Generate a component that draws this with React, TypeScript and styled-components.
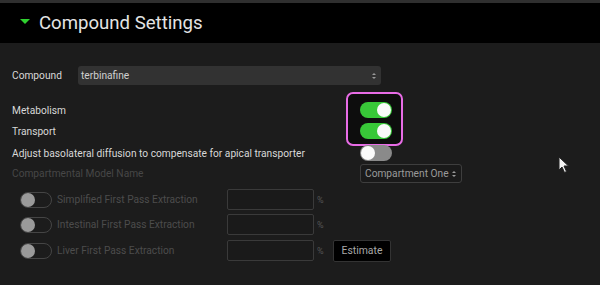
import React, { useState } from 'react';
import styled, { createGlobalStyle } from 'styled-components';

const GlobalStyle = createGlobalStyle`
  html, body {
    margin: 0;
    padding: 0;
    background: #1c1c1c;
  }
  body {
    font-family: Roboto, "Liberation Sans", Arial, sans-serif;
    width: 600px;
    height: 285px;
    overflow: hidden;
  }
`;

const Page = styled.div`
  position: relative;
  width: 600px;
  height: 285px;
  background: #1c1c1c;
  border-top: 3px solid #2f2f2f;
  box-sizing: border-box;
`;

const Header = styled.div`
  height: 40px;
  background: #000;
  display: flex;
  align-items: center;
  padding-left: 20px;
  gap: 9px;
`;

const Caret = styled.div`
  width: 0;
  height: 0;
  border-left: 5px solid transparent;
  border-right: 5px solid transparent;
  border-top: 5px solid #2fd12f;
  margin-top: -3px;
`;

const Title = styled.h2`
  margin: 0;
  font-size: 18.6px;
  font-weight: 400;
  color: #e4e4e4;
`;

const Body = styled.div`
  padding: 23px 12px 0 12px;
  display: flex;
  flex-direction: column;
`;

const CompoundRow = styled.div`
  display: flex;
  align-items: center;
  height: 19px;
`;

// left label column + right control column
const SettingRow = styled.div<{ $h: number; $mt: number }>`
  display: grid;
  grid-template-columns: 348px auto;
  align-items: center;
  height: ${p => p.$h}px;
  margin-top: ${p => p.$mt}px;
`;

const Label = styled.span<{ $w?: number; $dim?: boolean }>`
  font-size: 10.2px;
  color: ${p => (p.$dim ? '#474747' : '#d8d8d8')};
  width: ${p => (p.$w ? `${p.$w}px` : 'auto')};
  flex-shrink: 0;
  white-space: nowrap;
`;

const Select = styled.div<{ $w: number; $outline?: boolean }>`
  width: ${p => p.$w}px;
  height: 19px;
  box-sizing: border-box;
  border-radius: 3px;
  background: ${p => (p.$outline ? '#1a1a1a' : '#323232')};
  border: ${p => (p.$outline ? '1px solid #3e3e3e' : 'none')};
  display: flex;
  align-items: center;
  justify-content: space-between;
  padding: 0 5px 0 ${p => (p.$outline ? 4 : 3)}px;
  font-size: 10.2px;
  white-space: nowrap;
  color: ${p => (p.$outline ? '#9a9a9a' : '#d0d0d0')};
`;

const Arrows = styled.span`
  display: flex;
  flex-direction: column;
  gap: 2px;
  &::before, &::after {
    content: '';
    width: 0;
    height: 0;
    border-left: 2px solid transparent;
    border-right: 2px solid transparent;
  }
  &::before { border-bottom: 2px solid #999; }
  &::after { border-top: 2px solid #999; }
`;

const Highlight = styled.div`
  position: absolute;
  left: 346px;
  top: 89px;
  width: 57px;
  height: 54px;
  box-sizing: border-box;
  border: 2.5px solid #e86ce6;
  border-radius: 7px;
  background: #0d0d0d;
`;

const Track = styled.div<{ $on: boolean; $disabled?: boolean }>`
  position: relative;
  width: 32px;
  height: 16px;
  border-radius: 8px;
  box-sizing: border-box;
  cursor: pointer;
  background: ${p => (p.$disabled ? 'transparent' : p.$on ? '#38c838' : '#8a8a8a')};
  border: ${p => (p.$disabled ? '1px solid #454545' : 'none')};
  flex-shrink: 0;
`;

const Knob = styled.div<{ $on: boolean; $disabled?: boolean }>`
  position: absolute;
  top: ${p => (p.$disabled ? 0 : 1)}px;
  left: ${p => (p.$on ? 17 : p.$disabled ? 0 : 1)}px;
  width: 14px;
  height: 14px;
  border-radius: 50%;
  background: ${p => (p.$disabled ? '#9a9a9a' : '#fafafa')};
`;

const Toggle: React.FC<{ on: boolean; disabled?: boolean; onClick?: () => void }> = ({ on, disabled, onClick }) => (
  <Track $on={on} $disabled={disabled} onClick={disabled ? undefined : onClick}>
    <Knob $on={on} $disabled={disabled} />
  </Track>
);

const ExtractionRow = styled.div<{ $mt: number }>`
  display: flex;
  align-items: center;
  height: 21px;
  margin-top: ${p => p.$mt}px;
  padding-left: 8px;
`;

const ExtLabel = styled.span`
  font-size: 10.2px;
  color: #4c4c4c;
  margin-left: 5px;
  width: 170px;
  white-space: nowrap;
`;

const Field = styled.div`
  width: 87px;
  height: 21px;
  box-sizing: border-box;
  border: 1px solid #3a3a3a;
  border-radius: 2px;
  background: #1a1a1a;
`;

const Percent = styled.span`
  font-size: 9px;
  color: #555;
  margin-left: 3px;
  width: 16px;
`;

const EstimateButton = styled.button`
  height: 22px;
  width: 58px;
  box-sizing: border-box;
  background: #000;
  border: 1px solid #333;
  border-radius: 2px;
  color: #a8a8a8;
  font-family: inherit;
  font-size: 10.4px;
  padding: 0;
`;

const Cursor = styled.svg`
  position: absolute;
  left: 558px;
  top: 153px;
`;

export default function App() {
  const [metabolism, setMetabolism] = useState(true);
  const [transport, setTransport] = useState(true);
  const [adjust, setAdjust] = useState(false);

  const extractions = [
    { name: 'Simplified First Pass Extraction', mt: 6 },
    { name: 'Intestinal First Pass Extraction', mt: 4 },
    { name: 'Liver First Pass Extraction', mt: 5, estimate: true },
  ];

  return (
    <Page>
      <GlobalStyle />
      <Header>
        <Caret />
        <Title>Compound Settings</Title>
      </Header>
      <Highlight />
      <Body>
        <CompoundRow>
          <Label $w={66}>Compound</Label>
          <Select $w={303}>
            terbinafine
            <Arrows />
          </Select>
        </CompoundRow>
        <SettingRow $h={16} $mt={17}>
          <Label>Metabolism</Label>
          <Toggle on={metabolism} onClick={() => setMetabolism(!metabolism)} />
        </SettingRow>
        <SettingRow $h={16} $mt={5}>
          <Label>Transport</Label>
          <Toggle on={transport} onClick={() => setTransport(!transport)} />
        </SettingRow>
        <SettingRow $h={15} $mt={6}>
          <Label>Adjust basolateral diffusion to compensate for apical transporter</Label>
          <Toggle on={adjust} onClick={() => setAdjust(!adjust)} />
        </SettingRow>
        <SettingRow $h={19} $mt={4}>
          <Label $dim>Compartmental Model Name</Label>
          <Select $w={102} $outline>
            Compartment One
            <Arrows />
          </Select>
        </SettingRow>
        {extractions.map(e => (
          <ExtractionRow key={e.name} $mt={e.mt}>
            <Toggle on={false} disabled />
            <ExtLabel>{e.name}</ExtLabel>
            <Field />
            <Percent>%</Percent>
            {e.estimate && <EstimateButton>Estimate</EstimateButton>}
          </ExtractionRow>
        ))}
      </Body>
      <Cursor width="12" height="18" viewBox="0 0 12 18">
        <path d="M1 1 L1 14 L4 11 L6.5 16.5 L8.5 15.5 L6 10 L10.5 10 Z" fill="#f4f4f4" stroke="#222" strokeWidth="1" />
      </Cursor>
    </Page>
  );
}
